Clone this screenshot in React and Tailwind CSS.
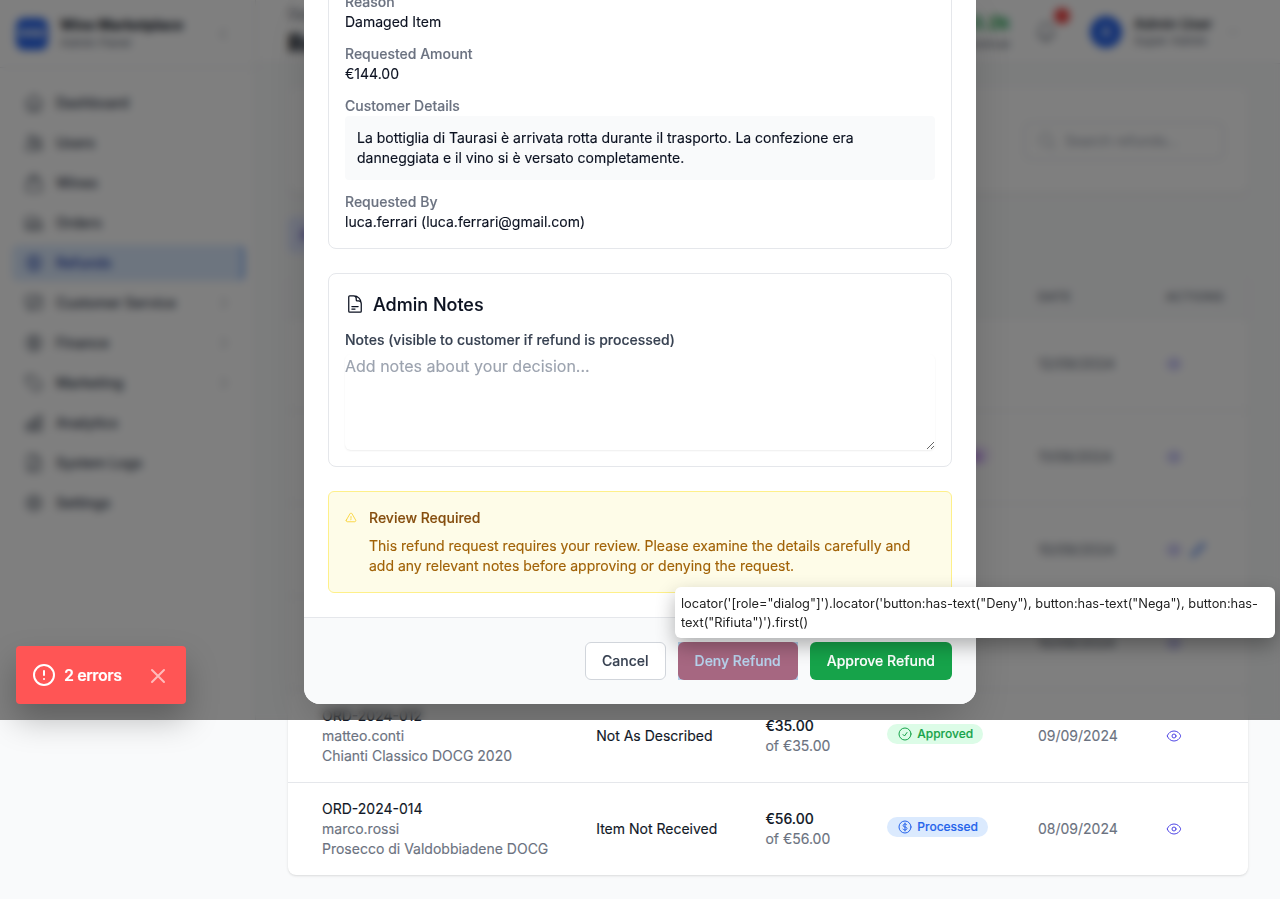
import React from "react";
import {
  HiOutlineHome, HiOutlineUsers, HiOutlineShoppingBag, HiOutlineTruck, HiOutlineCurrencyDollar,
  HiOutlineChatBubbleLeftRight, HiOutlineTag, HiOutlineChartBar, HiOutlineDocumentText,
  HiOutlineCog6Tooth, HiOutlineEye, HiOutlineCheckCircle, HiOutlineBell, HiOutlineMagnifyingGlass,
  HiOutlineExclamationTriangle, HiOutlinePencil, HiOutlineChevronLeft, HiOutlineChevronRight,
  HiOutlineChevronDown,
} from "react-icons/hi2";

const NAV = [
  { label: "Dashboard", icon: HiOutlineHome },
  { label: "Users", icon: HiOutlineUsers },
  { label: "Wines", icon: HiOutlineShoppingBag },
  { label: "Orders", icon: HiOutlineTruck },
  { label: "Refunds", icon: HiOutlineCurrencyDollar, active: true },
  { label: "Customer Service", icon: HiOutlineChatBubbleLeftRight, more: true },
  { label: "Finance", icon: HiOutlineCurrencyDollar, more: true },
  { label: "Marketing", icon: HiOutlineTag, more: true },
  { label: "Analytics", icon: HiOutlineChartBar },
  { label: "System Logs", icon: HiOutlineDocumentText },
  { label: "Settings", icon: HiOutlineCog6Tooth },
];

const ROWS = [
  { date: "12/09/2024" },
  { date: "11/09/2024", status: "processing" },
  { date: "10/09/2024", edit: true },
  { date: "10/09/2024" },
  { id: "ORD-2024-012", user: "matteo.conti", wine: "Chianti Classico DOCG 2020", reason: "Not As Described", amount: "€35.00", status: "approved", date: "09/09/2024" },
  { id: "ORD-2024-014", user: "marco.rossi", wine: "Prosecco di Valdobbiadene DOCG", reason: "Item Not Received", amount: "€56.00", status: "processed", date: "08/09/2024" },
];

const BADGES = {
  approved: { label: "Approved", icon: HiOutlineCheckCircle, cls: "bg-[#dcfce7] text-[#16a34a]" },
  processed: { label: "Processed", icon: HiOutlineCurrencyDollar, cls: "bg-[#dbeafe] text-[#2563eb]" },
  processing: { label: "Processing", icon: HiOutlineEye, cls: "bg-[#f3e8ff] text-[#9333ea]" },
};

function Badge({ status }) {
  const { label, icon: Icon, cls } = BADGES[status];
  return (
    <span className={`mb-1 inline-flex h-5 items-center gap-1 rounded-full px-2.5 text-xs font-medium ${cls}`}>
      <Icon className="size-4" />
      {label}
    </span>
  );
}

function Sidebar() {
  return (
    <aside className="h-[720px] w-64 shrink-0 border-r border-[#e5e7eb] bg-white">
      <div className="flex h-[68px] items-center border-b border-[#e5e7eb] pr-6 pl-4">
        <div className="flex size-8 items-center justify-center rounded-lg bg-[#2563eb] text-[10px] font-bold text-white">WINE</div>
        <div className="ml-3 flex-1">
          <div className="text-sm leading-[18px] font-bold tracking-[-0.005em] text-[#111827]">Wine Marketplace</div>
          <div className="text-xs leading-[17px] text-[#6b7280]">Admin Panel</div>
        </div>
        <HiOutlineChevronLeft className="size-4 text-[#6b7280]" />
      </div>
      <nav className="flex flex-col gap-1 pt-[17px] pr-[11px] pl-3">
        {NAV.map(({ label, icon: Icon, active, more }) => (
          <div
            key={label}
            className={`flex h-9 items-center gap-3 rounded-md px-3 text-sm font-medium ${active ? "border-r-2 border-[#3b82f6] bg-[#dbeafe] text-[#1e40af]" : "text-[#374151]"}`}
          >
            <Icon className="size-5" />
            <span className="flex-1">{label}</span>
            {more && <HiOutlineChevronRight className="size-4 text-[#6b7280]" />}
          </div>
        ))}
      </nav>
    </aside>
  );
}

function Header() {
  return (
    <header className="flex h-16 items-center border-b border-[#e5e7eb] bg-white pr-10 pl-8">
      <div className="flex-1">
        <div className="text-sm text-[#6b7280]">Dashboard</div>
        <div className="mt-1 text-2xl leading-8 font-extrabold text-[#111827]">Refunds</div>
      </div>
      <div className="mr-6 text-right">
        <div className="text-lg leading-6 font-bold text-[#16a34a]">€53.2k</div>
        <div className="text-xs leading-[18px] text-[#6b7280]">Revenue</div>
      </div>
      <div className="relative mr-8">
        <HiOutlineBell className="size-6 text-[#6b7280]" />
        <span className="absolute -top-3 left-5 size-4 rounded-full bg-[#ef4444]" />
      </div>
      <div className="flex size-8 items-center justify-center rounded-full bg-[#2563eb] text-sm font-medium text-white">A</div>
      <div className="ml-3 w-[92px]">
        <div className="text-sm leading-[18px] font-medium text-[#111827]">Admin User</div>
        <div className="text-xs text-[#6b7280]">Super Admin</div>
      </div>
      <HiOutlineChevronDown className="size-3.5 text-[#9ca3af]" />
    </header>
  );
}

const GRID = "grid grid-cols-[274.2px_169.2px_121.9px_150.7px_128px_1fr] items-center pl-[34px]";

function RefundTable() {
  return (
    <div className="mt-5 overflow-hidden rounded-lg bg-white shadow-[0_1px_3px_rgba(0,0,0,0.1),0_1px_2px_-1px_rgba(0,0,0,0.1)]">
      <div className={`${GRID} h-[45px] border-b border-[#e5e7eb] bg-[#f9fafb] pt-1 text-xs font-medium tracking-wider text-[#6b7280]`}>
        <span className="col-start-5">DATE</span>
        <span>ACTIONS</span>
      </div>
      {ROWS.map((r, i) => (
        <div key={i} className={`${GRID} border-[#e5e7eb] text-sm leading-5 text-[#6b7280] ${i < ROWS.length - 1 ? "h-[93px] border-b" : "h-[92px]"}`}>
          <div>
            {r.id && <div className="text-[#111827]">{r.id}</div>}
            <div>{r.user}</div>
            <div>{r.wine}</div>
          </div>
          <div className="text-[#111827]">{r.reason}</div>
          <div>
            {r.amount && (
              <>
                <div className="font-medium text-[#111827]">{r.amount}</div>
                <div>of {r.amount}</div>
              </>
            )}
          </div>
          <div className="flex">{r.status && <Badge status={r.status} />}</div>
          <div>{r.date}</div>
          <div className="flex gap-2 text-[#4f46e5]">
            <HiOutlineEye className="size-4" />
            {r.edit && <HiOutlinePencil className="size-4 stroke-2 text-[#2563eb]" />}
          </div>
        </div>
      ))}
    </div>
  );
}

function Field({ label, children }) {
  return (
    <div className="text-sm leading-5">
      <div className="font-medium text-[#6b7280]">{label}</div>
      {children}
    </div>
  );
}

function RefundDialog() {
  return (
    <div className="flex h-[720px] w-[672px] flex-col justify-end overflow-hidden rounded-2xl bg-white text-[#0b1120] shadow-2xl">
      <div className="flex flex-col gap-6 px-6 pb-6">
        <section className="flex flex-col gap-3 rounded-lg border border-[#e5e7eb] p-4">
          <Field label="Reason">Damaged Item</Field>
          <Field label="Requested Amount">€144.00</Field>
          <Field label="Customer Details">
            <p className="rounded-sm bg-[#f9fafb] p-3">
              La bottiglia di Taurasi è arrivata rotta durante il trasporto. La confezione era danneggiata e il vino si è versato completamente.
            </p>
          </Field>
          <Field label="Requested By">luca.ferrari (luca.ferrari@gmail.com)</Field>
        </section>
        <section className="rounded-lg border border-[#e5e7eb] p-4">
          <h3 className="flex h-7 items-center gap-2 text-lg leading-7 font-medium">
            <HiOutlineDocumentText className="size-5" />
            <span className="pt-0.5">Admin Notes</span>
          </h3>
          <label className="mt-3 mb-1 block text-sm leading-5 font-medium text-[#374151]">Notes (visible to customer if refund is processed)</label>
          <textarea
            rows={4}
            placeholder="Add notes about your decision..."
            className="block h-24 w-full rounded-md text-base leading-6 shadow-[0_1px_2px_rgba(0,0,0,0.07)] placeholder:text-[#9ca3af]"
          />
        </section>
        <section className="flex gap-3 rounded-md border border-[#fef08a] bg-[#fefce8] p-4 text-sm leading-5">
          <HiOutlineExclamationTriangle className="mt-1 size-3 shrink-0 text-[#facc15]" />
          <div>
            <h3 className="font-medium text-[#854d0e]">Review Required</h3>
            <p className="mt-2 text-[#a16207]">
              This refund request requires your review. Please examine the details carefully and add any relevant notes before approving or denying the request.
            </p>
          </div>
        </section>
      </div>
      <footer className="flex shrink-0 justify-end gap-3 border-t border-[#e5e7eb] bg-[#f9fafb] p-6 text-sm leading-5 font-medium">
        <button className="h-[38px] rounded-md border border-[#d1d5db] bg-white px-4 text-[#374151]">Cancel</button>
        <div className="relative">
          <button className="h-[38px] rounded-md bg-[#dc2626] px-[17px] text-white">Deny Refund</button>
          <div className="absolute inset-0 bg-[#6fa8dc]/50" />
        </div>
        <button className="h-[38px] rounded-md bg-[#16a34a] px-[17px] text-white">Approve Refund</button>
      </footer>
    </div>
  );
}

export default function App() {
  return (
    <div className="relative h-[899px] w-[1280px] overflow-hidden bg-[#f9fafb] font-['Inter',sans-serif] [-webkit-text-stroke:0.14px]">
      <div className="flex">
        <Sidebar />
        <div className="flex-1">
          <Header />
          <main className="px-8 pt-6">
            <div className="flex h-[105px] items-center justify-end rounded-lg bg-white px-6 shadow-sm">
              <div className="flex h-[38px] w-[200px] items-center gap-2 rounded-md border border-[#d1d5db] px-3 text-sm text-[#9ca3af]">
                <HiOutlineMagnifyingGlass className="size-5" />
                Search refunds...
              </div>
            </div>
            <div className="mt-6 flex">
              <span className="flex h-9 items-center rounded-md bg-[#e0e7ff] px-3 text-sm font-medium text-[#4338ca]">All Refunds</span>
            </div>
            <RefundTable />
          </main>
        </div>
      </div>

      <div className="absolute inset-x-0 top-0 flex h-[720px] items-end justify-center overflow-hidden bg-black/50 pb-4 backdrop-blur-[4px]">
        <RefundDialog />
      </div>

      <div className="absolute top-[646px] left-4 flex h-[58px] w-[170px] items-center rounded-sm bg-[#ff5555] px-4 text-base font-semibold tracking-[-0.025em] text-white shadow-[0_16px_32px_rgba(0,0,0,0.25)]">
        <svg className="size-6" viewBox="0 0 24 24" fill="none" stroke="currentColor" strokeWidth="2" strokeLinecap="round" strokeLinejoin="round">
          <circle cx="12" cy="12" r="10" />
          <path d="M12 8v4M12 16h.01" />
        </svg>
        <span className="ml-2 flex-1">2 errors</span>
        <svg className="mt-0.5 size-6 opacity-60" viewBox="0 0 24 24" fill="none" stroke="currentColor" strokeWidth="2" strokeLinecap="round">
          <path d="M18 6 6 18M6 6l12 12" />
        </svg>
      </div>

      <div className="absolute top-[587px] left-[675px] h-[50.5px] w-[600px] rounded-md bg-white px-1.5 py-[7px] text-[12.8px] leading-[19px] text-[#222222] shadow-[0_8px_19px_rgba(0,0,0,0.3)] [-webkit-text-stroke:0]">
        {`locator('[role="dialog"]').locator('button:has-text("Deny"), button:has-text("Nega"), button:has-text("Rifiuta")').first()`}
      </div>
    </div>
  );
}
